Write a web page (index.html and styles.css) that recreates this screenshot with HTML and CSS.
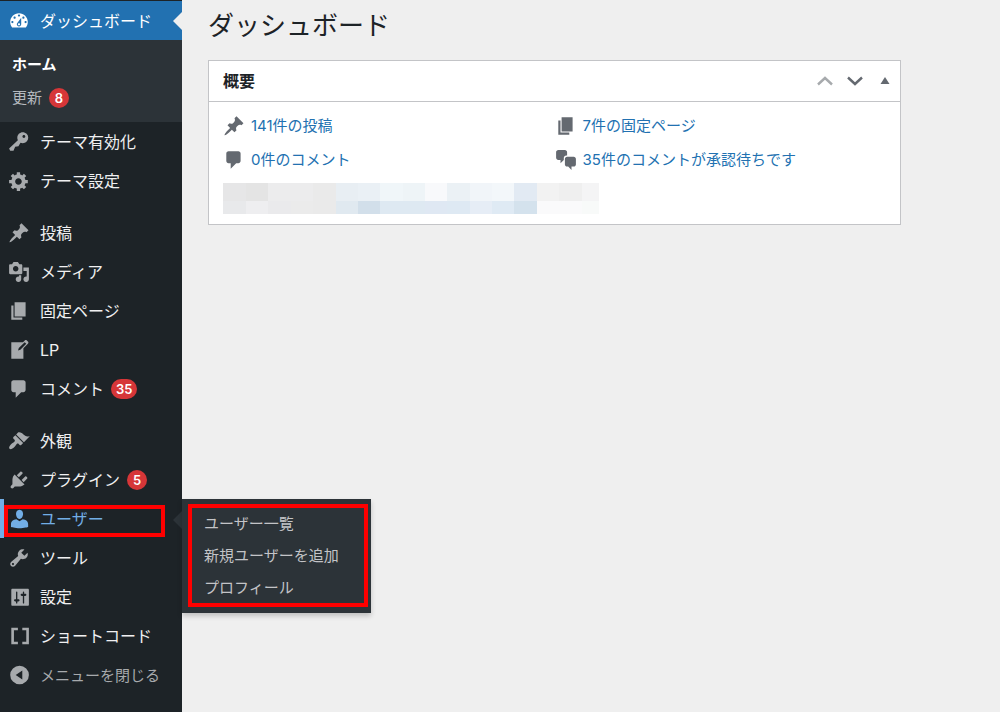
FILE: index.html
```html
<!DOCTYPE html>
<html lang="ja">
<head>
<meta charset="utf-8">
<meta name="viewport" content="width=device-width, initial-scale=1">
<title>ダッシュボード</title>
<link rel="stylesheet" href="styles.css">
</head>
<body>
<svg class="sprite" aria-hidden="true">
  <symbol id="i-post" viewBox="0 0 20 20"><path d="M10.44 3.02l1.82-1.82 6.36 6.35-1.83 1.82c-1.05-.68-2.48-.57-3.41.36l-.75.75c-.92.93-1.04 2.35-.35 3.41l-1.83 1.82-2.41-2.41-2.8 2.79c-.42.42-3.38 2.71-3.8 2.29s1.86-3.39 2.28-3.81l2.79-2.79L4.1 9.36l1.83-1.82c1.05.69 2.48.57 3.4-.36l.75-.75c.93-.92 1.05-2.35.36-3.41z"/></symbol>
  <symbol id="i-page" viewBox="0 0 20 20"><path d="M6 15V2h10v13H6zm-1 1h8v2H3V5h2v11z"/></symbol>
  <symbol id="i-comment" viewBox="0 0 20 20"><path d="M5 2h9c1.1 0 2 .9 2 2v7c0 1.1-.9 2-2 2h-2l-5 5v-5H5c-1.1 0-2-.9-2-2V4c0-1.1.9-2 2-2z"/></symbol>
</svg>
<div class="layout">
  <nav class="sidebar" aria-label="メインメニュー">
    <ul class="group">
      <li class="item current"><a class="link" href="#"><svg class="icon" viewBox="0 0 20 20"><path fill-rule="evenodd" d="M3.76 16h12.48c1.1-1.37 1.76-3.11 1.76-5 0-4.42-3.58-8-8-8s-8 3.58-8 8c0 1.89.66 3.63 1.76 5zM10 4c.55 0 1 .45 1 1s-.45 1-1 1-1-.45-1-1 .45-1 1-1zM6 6c.55 0 1 .45 1 1s-.45 1-1 1-1-.45-1-1 .45-1 1-1zm8 0c.55 0 1 .45 1 1s-.45 1-1 1-1-.45-1-1 .45-1 1-1zm-5.37 5.55L12 7v6c0 1.1-.9 2-2 2s-2-.9-2-2c0-.57.24-1.08.63-1.45zM4 10c.55 0 1 .45 1 1s-.45 1-1 1-1-.45-1-1 .45-1 1-1zm12 0c.55 0 1 .45 1 1s-.45 1-1 1-1-.45-1-1 .45-1 1-1zm-5 3c0-.55-.45-1-1-1s-1 .45-1 1 .45 1 1 1 1-.45 1-1z"/></svg>ダッシュボード</a>
        <ul class="submenu">
          <li><a class="sublink active" href="#">ホーム</a></li>
          <li><a class="sublink" href="#">更新<span class="badge">8</span></a></li>
        </ul>
      </li>
      <li class="item"><a class="link" href="#"><svg class="icon" viewBox="0 0 20 20"><path fill-rule="evenodd" d="M16.95 2.58c1.96 1.95 1.96 5.12 0 7.07-1.51 1.51-3.75 1.84-5.59 1.01l-1.87 3.31-2.99.31L5 18H2l-1-2 7.95-7.69c-.92-1.87-.62-4.18.93-5.73 1.95-1.96 5.12-1.96 7.07 0zm-2.51 3.79c.74 0 1.33-.6 1.33-1.34 0-.73-.59-1.33-1.33-1.33-.73 0-1.33.6-1.33 1.33 0 .74.6 1.34 1.33 1.34z"/></svg>テーマ有効化</a></li>
      <li class="item"><a class="link" href="#"><svg class="icon" viewBox="0 0 20 20"><path fill-rule="evenodd" d="M18 12h-2.18c-.17.7-.44 1.35-.81 1.93l1.54 1.54-2.1 2.1-1.54-1.54c-.58.36-1.23.63-1.91.79V19H8v-2.18c-.68-.16-1.33-.43-1.91-.79l-1.54 1.54-2.12-2.12 1.54-1.54c-.36-.58-.63-1.23-.79-1.91H1V9.03h2.17c.16-.7.44-1.35.8-1.94L2.43 5.55l2.1-2.1 1.54 1.54c.58-.37 1.24-.64 1.93-.81V2h3v2.18c.68.16 1.33.43 1.91.79l1.54-1.54 2.12 2.12-1.54 1.54c.36.59.64 1.24.8 1.94H18V12zm-8.5 1.5c1.66 0 3-1.34 3-3s-1.34-3-3-3-3 1.34-3 3 1.34 3 3 3z"/></svg>テーマ設定</a></li>
    </ul>
    <ul class="group">
      <li class="item"><a class="link" href="#"><svg class="icon"><use href="#i-post"/></svg>投稿</a></li>
      <li class="item"><a class="link" href="#"><svg class="icon" viewBox="0 0 20 20"><path fill-rule="evenodd" d="M13 11V4c0-.55-.45-1-1-1h-1.67L9 1H5L3.67 3H2c-.55 0-1 .45-1 1v7c0 .55.45 1 1 1h10c.55 0 1-.45 1-1zM7 4.5c1.38 0 2.5 1.12 2.5 2.5S8.38 9.5 7 9.5 4.5 8.38 4.5 7 5.62 4.5 7 4.5zM14 6h5v10.5c0 1.38-1.12 2.5-2.5 2.5S14 17.88 14 16.5s1.12-2.5 2.5-2.5c.17 0 .34.02.5.05V9h-3V6zm-4 8.05V13h2v3.5c0 1.38-1.12 2.5-2.5 2.5S7 17.88 7 16.5 8.12 14 9.5 14c.17 0 .34.02.5.05z"/></svg>メディア</a></li>
      <li class="item"><a class="link" href="#"><svg class="icon"><use href="#i-page"/></svg>固定ページ</a></li>
      <li class="item"><a class="link" href="#"><svg class="icon" viewBox="0 0 20 20"><path fill-rule="evenodd" d="M16.89 1.2l1.41 1.41c.39.39.39 1.02 0 1.41L14 8.33V18H3V3h10.67l1.8-1.8c.4-.39 1.03-.4 1.42 0zm-5.66 8.48l5.37-5.36-1.42-1.42-5.36 5.37-.71 2.12z"/></svg>LP</a></li>
      <li class="item"><a class="link" href="#"><svg class="icon"><use href="#i-comment"/></svg>コメント<span class="badge">35</span></a></li>
    </ul>
    <ul class="group">
      <li class="item"><a class="link" href="#"><svg class="icon" viewBox="0 0 20 20"><path d="M14.48 11.06L7.41 3.99l1.5-1.5c.5-.56 2.3-.47 3.51.32 1.21.8 1.43 1.28 2.91 2.1 1.18.64 2.45 1.26 4.45.85zm-.71.71L6.7 4.7 4.93 6.47c-.39.39-.39 1.02 0 1.41l1.06 1.06c.39.39.39 1.03 0 1.42-.6.6-1.43 1.11-2.21 1.69-.35.26-.7.53-1.01.84C1.43 14.23.4 16.08 1.4 17.07c.99 1 2.84-.03 4.18-1.36.31-.31.58-.66.85-1.02.57-.78 1.08-1.61 1.69-2.21.39-.39 1.02-.39 1.41 0l1.06 1.06c.39.39 1.02.39 1.41 0z"/></svg>外観</a></li>
      <li class="item"><a class="link" href="#"><svg class="icon" viewBox="0 0 20 20"><path d="M13.11 4.36L9.87 7.6 8 5.73l3.24-3.24c.35-.34 1.05-.2 1.56.32.52.51.66 1.21.31 1.55zm-8 1.77l.91-1.12 9.01 9.01-1.19.84c-.71.71-2.63 1.16-3.82 1.16H6.14L4.9 17.26c-.59.59-1.54.59-2.12 0-.59-.58-.59-1.53 0-2.12l1.24-1.24v-3.88c0-1.13.4-3.19 1.09-3.89zm7.26 3.97l3.24-3.24c.34-.35 1.04-.21 1.55.31.52.51.66 1.21.31 1.55l-3.24 3.25z"/></svg>プラグイン<span class="badge">5</span></a></li>
      <li class="item open"><a class="link" href="#"><svg class="icon" viewBox="0 0 20 20"><path d="M10.500 10C8 10 7.300 6.500 7.300 5.500c0-2 1-4 3.200-4s3.200 2 3.200 4c0 1-.7 4.500-3.200 4.500zM7.600 10.200l2.900 1.800 2.900-1.800c3 .2 4.900 2 4.900 4.600v2.400s-3.800 1.100-7.800 1.100-7.800-1.100-7.800-1.100v-2.400c0-2.600 1.900-4.400 4.900-4.600z"/></svg>ユーザー</a>
        <ul class="flyout">
          <li><a class="flylink" href="#">ユーザー一覧</a></li>
          <li><a class="flylink" href="#">新規ユーザーを追加</a></li>
          <li><a class="flylink" href="#">プロフィール</a></li>
        </ul>
      </li>
      <li class="item"><a class="link" href="#"><svg class="icon" viewBox="0 0 20 20"><path fill-rule="evenodd" d="M16.68 9.77c-1.34 1.34-3.3 1.67-4.95.99l-5.41 6.52c-.99.99-2.59.99-3.58 0s-.99-2.59 0-3.57l6.52-5.42c-.68-1.65-.35-3.61.99-4.95 1.28-1.28 3.12-1.62 4.72-1.06l-2.89 2.89 2.82 2.82 2.86-2.87c.53 1.58.18 3.39-1.08 4.65zM3.81 16.21c.4.39 1.04.39 1.43 0 .4-.4.4-1.04 0-1.43-.39-.4-1.03-.4-1.43 0-.39.39-.39 1.03 0 1.43z"/></svg>ツール</a></li>
      <li class="item"><a class="link" href="#"><svg class="icon" viewBox="0 0 20 20"><path fill-rule="evenodd" d="M19 17V3.500c0-.55-.45-1-1-1H4c-.55 0-1 .45-1 1V17c0 .55.45 1 1 1h14c.55 0 1-.45 1-1zM8.500 12h1c.55 0 1 .45 1 1s-.45 1-1 1h-1v1.500c0 .28-.22.5-.6.5s-.6-.22-.6-.5V14H6.500c-.55 0-1-.45-1-1s.45-1 1-1h.8V5.500c0-.28.22-.5.6-.5s.6.22.6.5V12zm5-3h-1c-.55 0-1-.45-1-1s.45-1 1-1h1V5.500c0-.28.22-.5.6-.5s.6.22.6.5V7h1c.55 0 1 .45 1 1s-.45 1-1 1h-1v6.500c0 .28-.22.5-.6.5s-.6-.22-.6-.5V9z"/></svg>設定</a></li>
      <li class="item"><a class="link" href="#"><svg class="icon" viewBox="0 0 20 20"><path d="M3 2.500h6v2.300H5.400v10.400H9v2.300H3zM19 2.500h-6v2.300h3.600v10.400H13v2.300h6z"/></svg>ショートコード</a></li>
      <li class="item"><button class="link collapse" type="button"><svg class="icon" viewBox="0 0 20 20"><path fill-rule="evenodd" d="M10.500 1.500a8.500 8.500 0 1 0 0 17 8.500 8.500 0 0 0 0-17zM13 5.800v8.400L7 10z"/></svg>メニューを閉じる</button></li>
    </ul>
  </nav>
  <main class="main">
    <h1 class="title">ダッシュボード</h1>
    <section class="panel" aria-labelledby="overview">
      <header class="panel-head">
        <h2 class="panel-title" id="overview">概要</h2>
        <div class="actions">
          <button class="action muted" type="button" aria-label="上に移動"><svg class="glyph" viewBox="0 0 16 16"><path class="stroke" d="M1 11.500L8 5l7 6.500"/></svg></button>
          <button class="action" type="button" aria-label="下に移動"><svg class="glyph" viewBox="0 0 16 16"><path class="stroke" d="M1 4.500L8 11l7-6.500"/></svg></button>
          <button class="action" type="button" aria-label="パネルを閉じる"><svg class="glyph" viewBox="0 0 16 16"><path d="M8 4l4.500 7h-9z"/></svg></button>
        </div>
      </header>
      <div class="panel-body">
        <ul class="stats">
          <li><a class="stat" href="#"><svg class="icon"><use href="#i-post"/></svg>141件の投稿</a></li>
          <li><a class="stat" href="#"><svg class="icon"><use href="#i-page"/></svg>7件の固定ページ</a></li>
          <li><a class="stat" href="#"><svg class="icon"><use href="#i-comment"/></svg>0件のコメント</a></li>
          <li><a class="stat" href="#"><svg class="icon" viewBox="0 0 20 20"><path d="M11 6h-.82C9.07 6 8 7.200 8 8.160V10l-3 3v-3H3c-1.100 0-2-.9-2-2V3c0-1.100.9-2 2-2h6c1.100 0 2 .9 2 2v3zm0 1h6c1.100 0 2 .9 2 2v5c0 1.100-.9 2-2 2h-2v3l-3-3h-1c-1.100 0-2-.9-2-2V9c0-1.100.9-2 2-2z"/></svg>35件のコメントが承認待ちです</a></li>
        </ul>
        <svg class="mosaic" viewBox="0 0 376 31" shape-rendering="crispEdges" aria-hidden="true">
          <path fill="#e6e6e7" d="M0 0h23v18H0z"/><path fill="#e4e4e4" d="M23 0h22v18H23z"/><path fill="#ececed" d="M45 0h45v18H45z"/><path fill="#eaeaea" d="M90 0h23v31H90z"/><path fill="#e8eef3" d="M113 0h22v18h-22z"/><path fill="#eaf0f5" d="M135 0h22v18h-22z"/><path fill="#f0f6f9" d="M157 0h23v18h-23z"/><path fill="#eef4f7" d="M180 0h22v18h-22z"/><path fill="#f8f9fb" d="M202 0h22v18h-22z"/><path fill="#ebf1f5" d="M224 0h23v18h-23z"/><path fill="#f1f5f9" d="M247 0h22v18h-22z"/><path fill="#f3f7fa" d="M269 0h22v18h-22z"/><path fill="#e2eaf3" d="M291 0h23v18h-23z"/><path fill="#f2f2f2" d="M314 0h22v18h-22z"/><path fill="#efefef" d="M336 0h23v18h-23z"/><path fill="#f4f4f5" d="M359 0h17v18h-17z"/>
          <path fill="#e8e9eb" d="M0 18h23v13H0z"/><path fill="#eeeef0" d="M23 18h22v13H23z"/><path fill="#eaeaec" d="M45 18h23v13H45z"/><path fill="#ebebeb" d="M68 18h22v13H68z"/><path fill="#e0e9f0" d="M113 18h22v13h-22z"/><path fill="#d2dfea" d="M135 18h22v13h-22z"/><path fill="#dee9f2" d="M157 18h45v13h-45z"/><path fill="#dfe8f3" d="M202 18h22v13h-22z"/><path fill="#dee9f3" d="M224 18h23v13h-23z"/><path fill="#e6edf6" d="M247 18h22v13h-22z"/><path fill="#dfeaf4" d="M269 18h22v13h-22z"/><path fill="#d4e2ed" d="M291 18h23v13h-23z"/><path fill="#fafafb" d="M314 18h45v13h-45z"/><path fill="#f8faf9" d="M359 18h17v13h-17z"/>
        </svg>
      </div>
    </section>
  </main>
</div>
</body>
</html>
```
FILE: styles.css
```css
* {
  box-sizing: border-box;
}

body {
  margin: 0;
  background: #efefef;
  color: #1d2327;
  font-family: Inter, "Noto Sans CJK JP", sans-serif;
  font-size: 15px;
  line-height: 20px;
}

ul {
  margin: 0;
  padding: 0;
  list-style: none;
}

a {
  text-decoration: none;
}

.sprite {
  display: none;
}

.layout {
  display: flex;
  min-height: 100vh;
}

.icon {
  flex: none;
  width: 22px;
  height: 22px;
  fill: currentColor;
}

/* Sidebar */

.sidebar {
  flex: none;
  width: 182px;
  padding-top: 1px;
  background: #1d2327;
}

.group + .group {
  padding-top: 13px;
}

.item {
  position: relative;
}

.link {
  display: flex;
  align-items: center;
  gap: 10px;
  width: 100%;
  height: 39px;
  padding: 0 8px;
  color: #f0f0f1;
  font-size: 16px;
}

.link .icon {
  color: #a7aaad;
}

.current .link,
.current .link .icon {
  background: #2271b1;
  color: #fff;
}

.current::after,
.open::after {
  content: "";
  position: absolute;
  top: 11px;
  right: 0;
  border: 9px solid transparent;
  border-left-width: 0;
  border-right-color: #efefef;
}

.open::after {
  top: 12px;
  border-right-color: #2c3338;
}

.submenu {
  padding: 8px 0;
  background: #2c3338;
}

.sublink {
  display: flex;
  align-items: center;
  gap: 7px;
  height: 33px;
  padding: 0 12px;
  color: #b4b9be;
}

.sublink.active {
  color: #fff;
  font-weight: 700;
}

.badge {
  min-width: 20px;
  padding: 0 5px;
  border-radius: 10px;
  background: #d63638;
  color: #fff;
  font-size: 13px;
  font-weight: 600;
  text-align: center;
}

.link .badge {
  margin-left: -3px;
}

.open .link,
.open .link .icon {
  color: #72aee6;
}

.open .link {
  box-shadow: inset 4px 0 #72aee6;
}

.open::before,
.flyout::before {
  content: "";
  position: absolute;
  z-index: 1;
  inset: 6px 17px 1px 4px;
  border: 4px solid #f00;
  pointer-events: none;
}

.flyout::before {
  inset: 5px 3px 6px 6px;
}

.flyout {
  position: absolute;
  z-index: 2;
  top: 0;
  left: 100%;
  width: 189px;
  padding: 9px 0;
  background: #2c3338;
  box-shadow: 0 3px 5px rgba(0, 0, 0, 0.2);
}

.flylink {
  display: flex;
  align-items: center;
  height: 32px;
  padding: 0 22px;
  color: #c3c4c7;
  white-space: nowrap;
}

.collapse {
  border: 0;
  background: none;
  color: #a7aaad;
  font-family: inherit;
  font-size: 15px;
  text-align: left;
}

/* Content */

.main {
  flex: 1;
  min-width: 0;
  padding: 9px 99px 24px 26px;
}

.title {
  margin: 0 0 17px;
  font-size: 26px;
  font-weight: 400;
  line-height: 34px;
}

.panel {
  border: 1px solid #c3c4c7;
  background: #fff;
}

.panel-head {
  display: flex;
  align-items: center;
  justify-content: space-between;
  height: 41px;
  padding: 0 7px 0 14px;
  border-bottom: 1px solid #c3c4c7;
}

.panel-title {
  margin: 0;
  font-size: 16px;
  font-weight: 700;
}

.actions {
  display: flex;
  gap: 14px;
}

.action {
  padding: 0;
  border: 0;
  background: none;
  color: #646970;
}

.action.muted {
  color: #a7aaad;
}

.glyph {
  display: block;
  width: 16px;
  height: 16px;
  fill: currentColor;
}

.stroke {
  fill: none;
  stroke: currentColor;
  stroke-width: 2.4;
}

.panel-body {
  padding: 7px 14px 10px;
}

.stats {
  display: grid;
  grid-template-columns: 1fr 1fr;
}

.stat {
  display: flex;
  align-items: center;
  gap: 6px;
  height: 34px;
  color: #2271b1;
}

.stat .icon {
  color: #646970;
}

.mosaic {
  display: block;
  width: 376px;
  max-width: 100%;
  margin-top: 6px;
}
```
